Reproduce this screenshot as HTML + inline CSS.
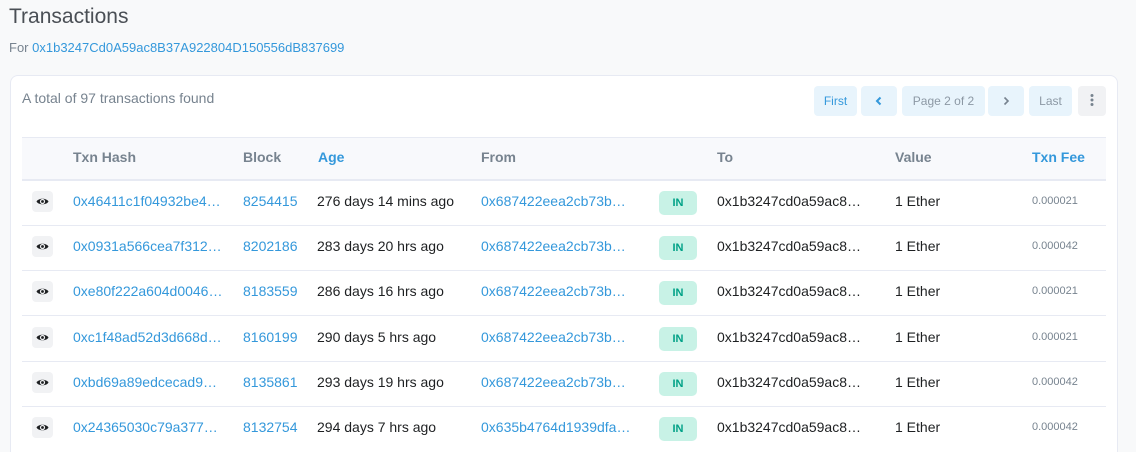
<!DOCTYPE html>
<html><head><meta charset="utf-8"><style>
*{box-sizing:border-box;margin:0;padding:0}
html,body{width:1136px;height:452px;overflow:hidden}
body{background:#f8f9fa;font-family:"Liberation Sans",sans-serif;position:relative;color:#1e2022}
.a{position:absolute;white-space:nowrap}
.l{color:#3498db}
h1{position:absolute;left:9px;top:5px;font-size:21px;font-weight:400;color:#4a4f55}
.card{position:absolute;left:10px;top:75px;width:1108px;height:377px;background:#fff;border:1px solid #e7eaf3;border-bottom:none;border-radius:8px 8px 0 0}
.btn{position:absolute;top:86px;height:30px;border-radius:4px;background:#e8f4fc;font-size:12px;line-height:30px;text-align:center;color:#3498db}
.th{position:absolute;left:22px;top:137px;width:1084px;height:44px;background:#f8f9fc;border-top:1px solid #e7eaf3;border-bottom:2px solid #e7eaf3}
.hd{position:absolute;top:149px;font-size:14px;font-weight:700;color:#77838f}
.hd.l{color:#3498db}
.row{position:absolute;left:22px;width:1084px;height:45px;border-bottom:1px solid #e7eaf3;font-size:14px}
.row .a{top:12px}
.eye{position:absolute;left:10px;top:10px;width:21px;height:21px;background:#f1f2f4;border-radius:4px}
.in{position:absolute;left:637px;top:10px;width:38px;height:24px;background:#c8f2e6;border-radius:5px;color:#00a186;font-size:11px;font-weight:700;text-align:center;line-height:24px}
.row .fee{font-size:11px;color:#77838f;top:14px}
</style></head><body>
<h1>Transactions</h1>
<div class="a" style="left:9px;top:40px;font-size:13px;color:#77838f">For <span class="l">0x1b3247Cd0A59ac8B37A922804D150556dB837699</span></div>
<div class="card"></div>
<div class="a" style="left:22px;top:90px;font-size:14px;color:#77838f">A total of 97 transactions found</div>
<div class="btn" style="left:814px;width:43px">First</div>
<div class="btn" style="left:861px;width:36px"><svg width="10" height="10" viewBox="0 0 10 10" style="vertical-align:-1px"><path d="M6.5 1.5L3 5L6.5 8.5" stroke="#3498db" stroke-width="2" fill="none"/></svg></div>
<div class="btn" style="left:902px;width:83px;color:#8c98a4">Page 2 of 2</div>
<div class="btn" style="left:988px;width:36px"><svg width="10" height="10" viewBox="0 0 10 10" style="vertical-align:-1px"><path d="M3.5 1.5L7 5L3.5 8.5" stroke="#77838f" stroke-width="1.6" fill="none"/></svg></div>
<div class="btn" style="left:1029px;width:43px;color:#8c98a4">Last</div>
<div class="btn" style="left:1078px;width:28px;background:#f1f2f4"><svg width="6" height="14" viewBox="0 0 6 14" style="vertical-align:-2px"><circle cx="3" cy="2.5" r="1.5" fill="#77838f"/><circle cx="3" cy="7" r="1.5" fill="#77838f"/><circle cx="3" cy="11.5" r="1.5" fill="#77838f"/></svg></div>
<div class="th"></div>
<div class="hd" style="left:73px">Txn Hash</div>
<div class="hd" style="left:243px">Block</div>
<div class="hd l" style="left:318px">Age</div>
<div class="hd" style="left:481px">From</div>
<div class="hd" style="left:717px">To</div>
<div class="hd" style="left:895px">Value</div>
<div class="hd l" style="left:1032px">Txn Fee</div>
<div id="rows"></div>
<script>
var d=[["0x46411c1f04932be4…","8254415","276 days 14 mins ago","0x687422eea2cb73b…","0.000021"],
["0x0931a566cea7f312…","8202186","283 days 20 hrs ago","0x687422eea2cb73b…","0.000042"],
["0xe80f222a604d0046…","8183559","286 days 16 hrs ago","0x687422eea2cb73b…","0.000021"],
["0xc1f48ad52d3d668d…","8160199","290 days 5 hrs ago","0x687422eea2cb73b…","0.000021"],
["0xbd69a89edcecad9…","8135861","293 days 19 hrs ago","0x687422eea2cb73b…","0.000042"],
["0x24365030c79a377…","8132754","294 days 7 hrs ago","0x635b4764d1939dfa…","0.000042"]];
var h="";d.forEach(function(r,i){var hh=i==5?'height:44px;border-bottom:none;':'';h+='<div class="row" style="'+hh+'top:'+(181+i*45.2)+'px"><div class="eye"><svg width="21" height="21" viewBox="0 0 21 21"><path d="M4.5 10.5C6.5 6.8 14.5 6.8 16.5 10.5C14.5 14.2 6.5 14.2 4.5 10.5Z" fill="#1e2022"/><circle cx="10.5" cy="10.5" r="2.6" fill="#f1f2f4"/><circle cx="10.5" cy="10.5" r="1.4" fill="#1e2022"/></svg></div><span class="a l" style="left:51px">'+r[0]+'</span><span class="a l" style="left:221px">'+r[1]+'</span><span class="a" style="left:295px">'+r[2]+'</span><span class="a l" style="left:459px">'+r[3]+'</span><div class="in">IN</div><span class="a" style="left:695px">0x1b3247cd0a59ac8…</span><span class="a" style="left:873px">1 Ether</span><span class="a fee" style="left:1010px">'+r[4]+'</span></div>'});
document.getElementById("rows").innerHTML=h;
</script>
</body></html>
